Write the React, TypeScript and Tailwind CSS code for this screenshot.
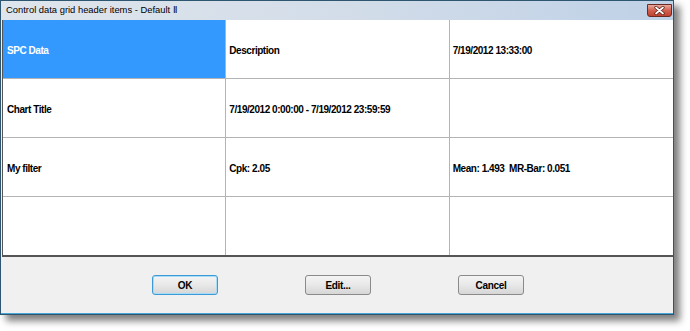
import React from "react";

const rows: string[][] = [
  ["SPC Data", "Description", "7/19/2012 13:33:00"],
  ["Chart Title", "7/19/2012 0:00:00 - 7/19/2012 23:59:59", ""],
  ["My filter", "Cpk: 2.05", "Mean: 1.493  MR-Bar: 0.051"],
  ["", "", ""],
];

function CloseButton() {
  return (
    <div className="w-[25px] h-[13px] rounded-b-[3px] border border-[#6b2a22] bg-gradient-to-b from-[#e9a99e] via-[#d0604f] to-[#c2402f] flex items-center justify-center">
      <svg width="11" height="9" viewBox="0 0 11 9">
        <path d="M2 1.5 L9 7.5 M9 1.5 L2 7.5" stroke="#5a1e16" strokeWidth="3.2" strokeLinecap="round" />
        <path d="M2 1.5 L9 7.5 M9 1.5 L2 7.5" stroke="#ffffff" strokeWidth="1.7" strokeLinecap="round" />
      </svg>
    </div>
  );
}

function Button({ label, focused }: { label: string; focused?: boolean }) {
  return (
    <button
      className={`w-[66px] h-[20px] rounded-[3px] border text-[10px] font-bold tracking-[-0.3px] text-black bg-gradient-to-b from-[#f4f4f4] via-[#e8e8e8] to-[#d6d6d6] ${
        focused ? "border-[#3c9bd6] shadow-[inset_0_0_0_1px_#a7dcf6]" : "border-[#8a8a8a]"
      }`}
    >
      {label}
    </button>
  );
}

export default function App() {
  return (
    <div className="w-[690px] h-[331px] bg-white" style={{ fontFamily: '"Liberation Sans", Arial, sans-serif' }}>
      <div className="w-[674px] h-[315px] border border-[#2f5670] bg-[#f0f0f0] flex flex-col shadow-[6px_6px_7px_rgba(0,0,0,0.5)]">
        {/* title bar */}
        <div className="h-[19px] shrink-0 flex items-start justify-between bg-gradient-to-r from-[#dfe5ec] via-[#d3dde9] to-[#bfd1e7]">
          <span className="pl-[5px] pt-[3px] text-[9.4px] leading-[12px] text-black">
            Control data grid header items - Default Ⅱ
          </span>
          <div className="pt-[3px] pr-[1px]">
            <CloseButton />
          </div>
        </div>

        {/* grid */}
        <div className="ml-[1px] border-l border-b-2 border-[#555555] bg-white shrink-0">
          {rows.map((row, r) => (
            <div key={r} className={`grid grid-cols-3 h-[58px] ${r < 3 ? "box-content border-b border-[#b4b4b4]" : ""}`}>
              {row.map((cell, c) => {
                const selected = r === 0 && c === 0;
                return (
                  <div
                    key={c}
                    className={`flex items-center pt-[2px] whitespace-pre text-[10px] font-bold tracking-[-0.45px] ${
                      c < 2 ? "border-r border-[#b4b4b4]" : ""
                    } ${c === 0 ? "pl-[4px]" : "pl-[3px]"} ${selected ? "bg-[#3399ff] text-white" : "text-black"}`}
                  >
                    {cell}
                  </div>
                );
              })}
            </div>
          ))}
        </div>

        {/* footer */}
        <div className="flex-1 flex items-center justify-center gap-[87px] pl-[2px] border-b border-[#4aa6d8]">
          <Button label="OK" focused />
          <Button label="Edit..." />
          <Button label="Cancel" />
        </div>
      </div>
    </div>
  );
}
